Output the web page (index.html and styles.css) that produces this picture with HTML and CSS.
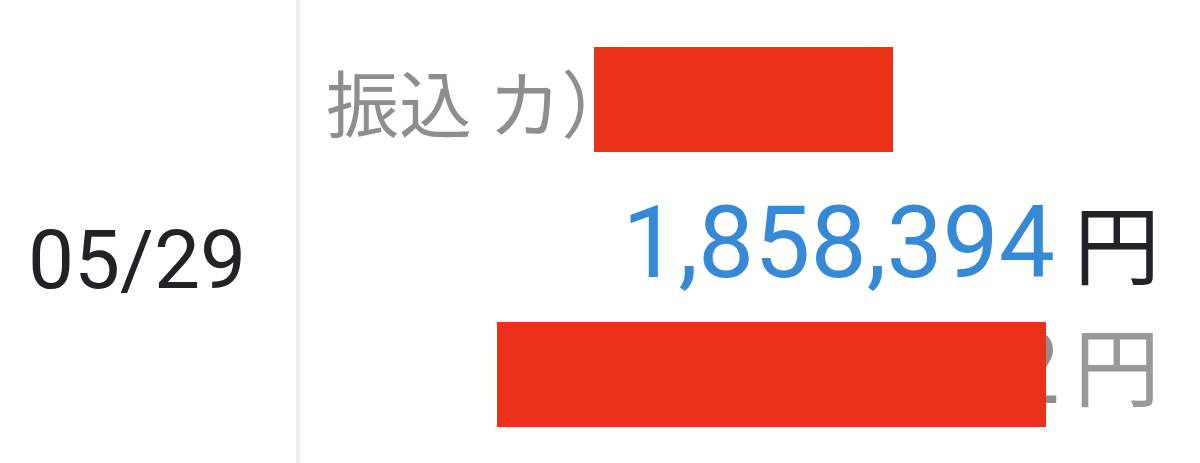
FILE: index.html
```html
<!DOCTYPE html>
<html lang="ja">
<head>
<meta charset="utf-8">
<link rel="stylesheet" href="styles.css">
</head>
<body>
<div class="row">
  <div class="date">05/29</div>
  <div class="divider"></div>
  <div class="detail">
    <div class="payee"><span class="payee-text">振込 カ）</span><span class="redact redact-name"></span></div>
    <div class="amount"><span class="num">1,858,394</span><span class="yen">円</span></div>
    <div class="balance"><span class="bal-num">2</span><span class="redact redact-bal"></span><span class="yen yen-gray">円</span></div>
  </div>
</div>
</body>
</html>
```
FILE: styles.css
```css
html, body {
  margin: 0;
  padding: 0;
  background: #ffffff;
}
body {
  width: 1200px;
  height: 463px;
  overflow: hidden;
  font-family: Roboto, "Noto Sans CJK JP", sans-serif;
}
.row {
  display: flex;
  height: 463px;
}
.date {
  width: 296px;
  display: flex;
  align-items: center;
  justify-content: center;
  font-size: 82px;
  color: #222326;
  box-sizing: border-box;
  padding-right: 22px;
  padding-top: 56px;
}
.divider {
  width: 4px;
  background: #eceef2;
}
.detail {
  flex: 1;
  display: flex;
  flex-direction: column;
  padding: 47px 40px 0 26px;
}
.payee {
  display: flex;
  align-items: center;
  height: 105px;
}
.payee-text {
  font-family: "Noto Sans CJK JP", sans-serif;
  font-size: 73px;
  color: #8e8e8e;
  margin-right: -40px;
}
.redact {
  display: inline-block;
  background: #ec3119;
}
.redact-name {
  width: 299px;
  height: 105px;
}
.amount {
  display: flex;
  justify-content: flex-end;
  align-items: center;
  height: 170px;
  padding-top: 10px;
  box-sizing: border-box;
}
.num {
  font-size: 100px;
  color: #3589d6;
  margin-right: 19px;
}
.yen {
  font-family: "Noto Sans CJK JP", sans-serif;
  font-size: 86px;
  color: #222326;
  margin-top: -4px;
}
.balance {
  display: flex;
  justify-content: flex-end;
  align-items: flex-start;
  height: 105px;
  position: relative;
}
.bal-num {
  font-size: 100px;
  line-height: 105px;
  color: #8e8e8e;
  position: absolute;
  right: 100px;
  top: -6px;
}
.redact-bal {
  width: 549px;
  height: 105px;
  margin-right: 28px;
  position: relative;
}
.yen-gray {
  color: #999999;
  line-height: 1;
  margin-top: -2px;
}
```
